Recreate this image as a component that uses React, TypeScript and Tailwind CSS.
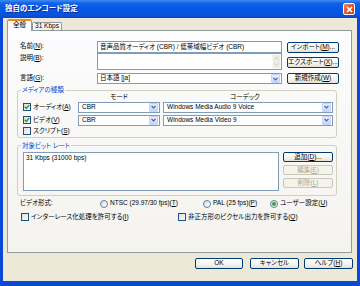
import React from "react";

// Windows XP style "独自のエンコード設定" dialog

function K({ c }: { c: string }) {
  return <span className="underline underline-offset-[1px]">{c}</span>;
}

function Btn({
  children,
  className = "",
  disabled = false,
}: {
  children: React.ReactNode;
  className?: string;
  disabled?: boolean;
}) {
  return (
    <div
      className={
        "flex items-center justify-center whitespace-nowrap rounded-[2px] border " +
        (disabled
          ? "border-[#C9C7BA] bg-[#F5F4EA] text-[#ACA899] "
          : "border-[#003C74] bg-[linear-gradient(180deg,#FFFFFF_0%,#F4F3EE_60%,#E3E0D6_100%)] text-black ") +
        className
      }
    >
      {children}
    </div>
  );
}

function Arrow() {
  return (
    <div className="flex h-[9px] w-[9px] items-center justify-center rounded-[1px] border border-[#C3D3FD] bg-[linear-gradient(180deg,#E6EEFC_0%,#C6D6FA_100%)]">
      <svg width="5" height="4" viewBox="0 0 5 4">
        <path d="M0.5 0.8 L2.5 2.8 L4.5 0.8" fill="none" stroke="#4D6185" strokeWidth="1.2" />
      </svg>
    </div>
  );
}

function Combo({ value, className = "" }: { value: string; className?: string }) {
  return (
    <div className={"flex h-[11px] items-center border border-[#7F9DB9] bg-white " + className}>
      <span className="flex-1 whitespace-nowrap pl-[2px]">{value}</span>
      <div className="mr-px">
        <Arrow />
      </div>
    </div>
  );
}

function Check({ checked = false }: { checked?: boolean }) {
  return (
    <div className="flex h-[8px] w-[8px] shrink-0 items-center justify-center border border-[#1C5180] bg-[linear-gradient(135deg,#DCDCD7_0%,#FFFFFF_100%)]">
      {checked && (
        <svg width="6" height="6" viewBox="0 0 6 6">
          <path d="M0.8 2.8 L2.3 4.4 L5.3 1" fill="none" stroke="#21A121" strokeWidth="1.4" />
        </svg>
      )}
    </div>
  );
}

function Radio({ checked = false }: { checked?: boolean }) {
  return (
    <div className="flex h-[8px] w-[8px] shrink-0 items-center justify-center rounded-full border border-[#5E7FA8] bg-[linear-gradient(135deg,#DCDCD7_0%,#FFFFFF_100%)]">
      {checked && <div className="h-[4px] w-[4px] rounded-full bg-[#2DAA2D]" />}
    </div>
  );
}

export default function App() {
  return (
    <div className="flex h-[286px] w-[360px] flex-col overflow-hidden bg-[#0A48D8] font-['Liberation_Sans','Noto_Sans_CJK_JP',sans-serif] text-[6.5px] leading-none text-black [font-feature-settings:'palt']">
      {/* title bar */}
      <div className="flex h-[18px] shrink-0 items-center bg-[linear-gradient(180deg,#3F8CF3_0%,#0F62EA_18%,#0657E4_55%,#0A52DB_85%,#0847CF_100%)] pl-[5px] pr-[5px]">
        <span className="text-[7.5px] font-bold text-white [text-shadow:1px_1px_0_#0B2B8C]">
          独自のエンコード設定
        </span>
        <div className="ml-auto flex h-[12px] w-[12px] items-center justify-center rounded-[2px] border border-white bg-[linear-gradient(135deg,#F08A66_0%,#E0552C_50%,#C8411C_100%)]">
          <svg width="7" height="7" viewBox="0 0 7 7">
            <path d="M1 1 L6 6 M6 1 L1 6" stroke="white" strokeWidth="1.6" />
          </svg>
        </div>
      </div>

      {/* client area */}
      <div className="mx-[3px] mb-[5px] flex flex-1 flex-col bg-[#ECE9D8]">
        {/* tabs */}
        <div className="mt-[1px] flex h-[12px] items-end pl-[4px]">
          <div className="relative z-10 flex h-[12px] w-[25px] items-center justify-center rounded-t-[2px] border-x border-t-[2px] border-x-[#919B9C] border-t-[#E68B2C] bg-[#FCFCFE] pb-[1px]">
            全般
          </div>
          <div className="flex h-[9px] w-[30px] items-center justify-center rounded-t-[2px] border-x border-t border-[#919B9C] bg-[linear-gradient(180deg,#FFFFFF_0%,#ECEBE6_100%)] pb-[1px]">
            31 Kbps
          </div>
        </div>

        {/* tab page */}
        <div className="-mt-px ml-[4px] flex h-[223px] w-[345px] flex-col border border-[#919B9C] bg-[linear-gradient(180deg,#FCFCFE_0%,#F4F3EE_100%)]">
          {/* name */}
          <div className="mt-[10px] flex items-start">
            <div className="ml-[12px] w-[77px] pt-[2px]">
              名前(<K c="N" />):
            </div>
            <div className="flex h-[12px] w-[185px] items-center whitespace-nowrap border border-[#7F9DB9] bg-white pl-[2px]">
              音声品質オーディオ (CBR) / 低帯域幅ビデオ (CBR)
            </div>
            <Btn className="ml-[5px] mt-[1px] h-[11px] w-[52px]">
              インポート(<K c="M" />)...
            </Btn>
          </div>
          {/* description */}
          <div className="flex items-start">
            <div className="ml-[12px] w-[77px] pt-[2px]">
              説明(<K c="B" />):
            </div>
            <div className="flex h-[17px] w-[185px] justify-end border border-[#7F9DB9] bg-white">
              <div className="flex w-[9px] flex-col justify-between bg-[#F7F7F4] p-px">
                <div className="flex h-[7px] items-center justify-center rounded-[1px] bg-[#EEEDE5]">
                  <svg width="5" height="3" viewBox="0 0 5 3">
                    <path d="M0.5 2.5 L2.5 0.5 L4.5 2.5" fill="none" stroke="#C9C7BA" strokeWidth="1" />
                  </svg>
                </div>
                <div className="flex h-[7px] items-center justify-center rounded-[1px] bg-[#EEEDE5]">
                  <svg width="5" height="3" viewBox="0 0 5 3">
                    <path d="M0.5 0.5 L2.5 2.5 L4.5 0.5" fill="none" stroke="#C9C7BA" strokeWidth="1" />
                  </svg>
                </div>
              </div>
            </div>
            <Btn className="ml-[5px] mt-[4px] h-[11px] w-[52px]">
              エクスポート(<K c="X" />)...
            </Btn>
          </div>
          {/* language */}
          <div className="mt-[3px] flex items-center">
            <div className="ml-[12px] w-[77px]">
              言語(<K c="G" />):
            </div>
            <Combo value="日本語 [ja]" className="w-[185px]" />
            <Btn className="ml-[5px] h-[11px] w-[52px]">
              新規作成(<K c="W" />)
            </Btn>
          </div>

          {/* media types */}
          <fieldset className="ml-[9px] mt-[3px] w-[320px] rounded-[3px] border border-[#D0D0BF] pb-[1px]">
            <legend className="ml-[3px] px-[1px] text-[#0046D5]">メディアの種類</legend>
            <div className="flex h-[7px] pl-[60px]">
              <div className="w-[82px] text-center">モード</div>
              <div className="ml-[3px] w-[164px] text-center">コーデック</div>
            </div>
            <div className="mt-[1px] flex items-center pl-[5px]">
              <div className="flex w-[55px] items-center">
                <Check checked />
                <span className="ml-[2px]">
                  オーディオ(<K c="A" />)
                </span>
              </div>
              <Combo value="CBR" className="w-[82px] pl-px" />
              <Combo value="Windows Media Audio 9 Voice" className="ml-[3px] w-[170px] pl-px" />
            </div>
            <div className="mt-[2px] flex items-center pl-[5px]">
              <div className="flex w-[55px] items-center">
                <Check checked />
                <span className="ml-[2px]">
                  ビデオ(<K c="V" />)
                </span>
              </div>
              <Combo value="CBR" className="w-[82px] pl-px" />
              <Combo value="Windows Media Video 9" className="ml-[3px] w-[170px] pl-px" />
            </div>
            <div className="mt-[1px] flex h-[9px] items-center pl-[5px]">
              <Check />
              <span className="ml-[2px]">
                スクリプト(<K c="S" />)
              </span>
            </div>
          </fieldset>

          {/* target bit rates */}
          <fieldset className="ml-[9px] mt-[5px] w-[320px] rounded-[3px] border border-[#D0D0BF] pb-[4px]">
            <legend className="ml-[3px] px-[1px] text-[#0046D5]">対象ビット レート</legend>
            <div className="mt-[3px] flex pl-[5px]">
              <div className="h-[39px] w-[256px] border border-[#7F9DB9] bg-white pl-[2px] pt-[2px]">
                31 Kbps (31000 bps)
              </div>
              <div className="ml-[4px] flex w-[50px] flex-col gap-[3px]">
                <Btn className="h-[10px] w-[50px]">
                  追加(<K c="D" />)...
                </Btn>
                <Btn disabled className="h-[10px] w-[50px]">
                  編集(<K c="E" />)
                </Btn>
                <Btn disabled className="h-[10px] w-[50px]">
                  削除(<K c="L" />)
                </Btn>
              </div>
            </div>
          </fieldset>

          {/* video format */}
          <div className="mt-[3px] flex h-[9px] items-center">
            <div className="ml-[12px] w-[80px]">ビデオ形式:</div>
            <div className="flex w-[103px] items-center">
              <Radio />
              <span className="ml-[2px]">
                NTSC (29.97/30 fps)(<K c="T" />)
              </span>
            </div>
            <div className="flex w-[67px] items-center">
              <Radio />
              <span className="ml-[2px]">
                PAL (25 fps)(<K c="P" />)
              </span>
            </div>
            <div className="flex items-center">
              <Radio checked />
              <span className="ml-[2px]">
                ユーザー設定(<K c="U" />)
              </span>
            </div>
          </div>
          <div className="mt-[5px] flex items-center">
            <div className="ml-[13px] flex w-[157px] items-center">
              <Check />
              <span className="ml-[2px]">
                インターレース化処理を許可する(<K c="I" />)
              </span>
            </div>
            <div className="flex items-center">
              <Check />
              <span className="ml-[2px]">
                非正方形のピクセル出力を許可する(<K c="Q" />)
              </span>
            </div>
          </div>
        </div>

        {/* dialog buttons */}
        <div className="mt-[5px] flex justify-end pr-[4px]">
          <Btn className="h-[11px] w-[48px]">OK</Btn>
          <Btn className="ml-[7px] h-[11px] w-[49px]">キャンセル</Btn>
          <Btn className="ml-[5px] h-[11px] w-[49px]">
            ヘルプ(<K c="H" />)
          </Btn>
        </div>
      </div>
    </div>
  );
}
